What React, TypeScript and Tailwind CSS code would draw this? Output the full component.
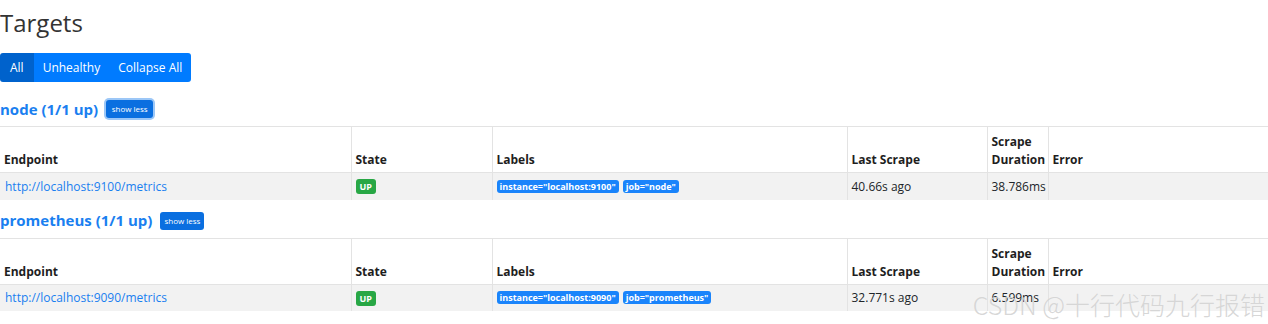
import React from 'react';

type Target = {
  job: string;
  endpoint: string;
  labels: string[];
  lastScrape: string;
  duration: string;
  btnWidth: string;
};

const targets: Target[] = [
  {
    job: 'node',
    endpoint: 'http://localhost:9100/metrics',
    labels: ['instance="localhost:9100"', 'job="node"'],
    lastScrape: '40.66s ago',
    duration: '38.786ms',
    btnWidth: 'w-[47px]',
  },
  {
    job: 'prometheus',
    endpoint: 'http://localhost:9090/metrics',
    labels: ['instance="localhost:9090"', 'job="prometheus"'],
    lastScrape: '32.771s ago',
    duration: '6.599ms',
    btnWidth: 'w-[44px]',
  },
];

function TargetTable({ t }: { t: Target }) {
  return (
    <table className="w-full table-fixed border-collapse text-[12px] text-[#212529]">
      <colgroup>
        <col className="w-[351px]" />
        <col className="w-[141px]" />
        <col className="w-[355px]" />
        <col className="w-[140px]" />
        <col className="w-[61px]" />
        <col />
      </colgroup>
      <thead>
        <tr className="h-[46px]">
          {['Endpoint', 'State', 'Labels', 'Last Scrape', 'Scrape Duration', 'Error'].map((h, i) => (
            <th
              key={h}
              className={`border-t border-b border-[#e3e3e3] px-[4px] pb-[3px] text-left align-bottom font-bold leading-[18px] text-[#1e1e1e] ${
                i > 0 ? 'border-l' : ''
              }`}
            >
              {h}
            </th>
          ))}
        </tr>
      </thead>
      <tbody>
        <tr className="h-[27px] bg-[#f2f2f2]">
          <td className="px-[5px] pt-[1px] align-middle">
            <a className="text-[#1a7ff0]">{t.endpoint}</a>
          </td>
          <td className="border-l border-[#e3e3e3] px-[4px]">
            <span className="rounded-[3px] bg-[#28a745] px-[4px] py-[1px] text-[9px] font-bold text-white">UP</span>
          </td>
          <td className="border-l border-[#e3e3e3] px-[4px]">
            <div className="flex gap-[4px]">
              {t.labels.map((l) => (
                <span
                  key={l}
                  className="rounded-[3px] bg-[#1a84fb] px-[3px] py-[1px] text-[9px] leading-[11px] font-bold text-white"
                >
                  {l}
                </span>
              ))}
            </div>
          </td>
          <td className="border-l border-[#e3e3e3] px-[4px] pt-[1px]">{t.lastScrape}</td>
          <td className="border-l border-[#e3e3e3] px-[4px] pt-[1px]">{t.duration}</td>
          <td className="border-l border-[#e3e3e3]"></td>
        </tr>
      </tbody>
    </table>
  );
}

export default function App() {
  return (
    <div className="relative h-[324px] w-[1268px] overflow-hidden bg-white font-['Open_Sans',sans-serif] text-[#212529]">
      <h2 className="pt-[8px] text-[24px] leading-[30px] text-[#333]">Targets</h2>
      <div className="mt-[15px] flex h-[29px] w-fit overflow-hidden rounded-[3px] text-[12px] text-white">
        <button className="bg-[#0062cc] px-[10px]">All</button>
        <button className="bg-[#007bff] px-[9px]">Unhealthy</button>
        <button className="bg-[#007bff] px-[9px]">Collapse All</button>
      </div>
      <div className="pt-[6px]">
        {targets.map((t) => (
          <div key={t.job}>
            <div className="flex h-[38px] items-center gap-[8px] pt-[4px]">
              <span className="text-[15px] font-bold text-[#1a7ff0]">
                {t.job} (1/1 up)
              </span>
              <button
                className={`h-[18px] ${t.btnWidth} rounded-[3px] bg-[#0a6fe0] text-[8px] text-white ${
                  t.job === 'node' ? 'ring-2 ring-[#9cc7f7]' : ''
                }`}
              >
                show less
              </button>
            </div>
            <TargetTable t={t} />
          </div>
        ))}
      </div>
      <div className="pointer-events-none absolute right-[3px] bottom-[5px] font-['Noto_Sans_CJK_SC',sans-serif] text-[25px] leading-[30px] font-light text-[#d2d2d2]/90">
        CSDN @十行代码九行报错
      </div>
    </div>
  );
}
